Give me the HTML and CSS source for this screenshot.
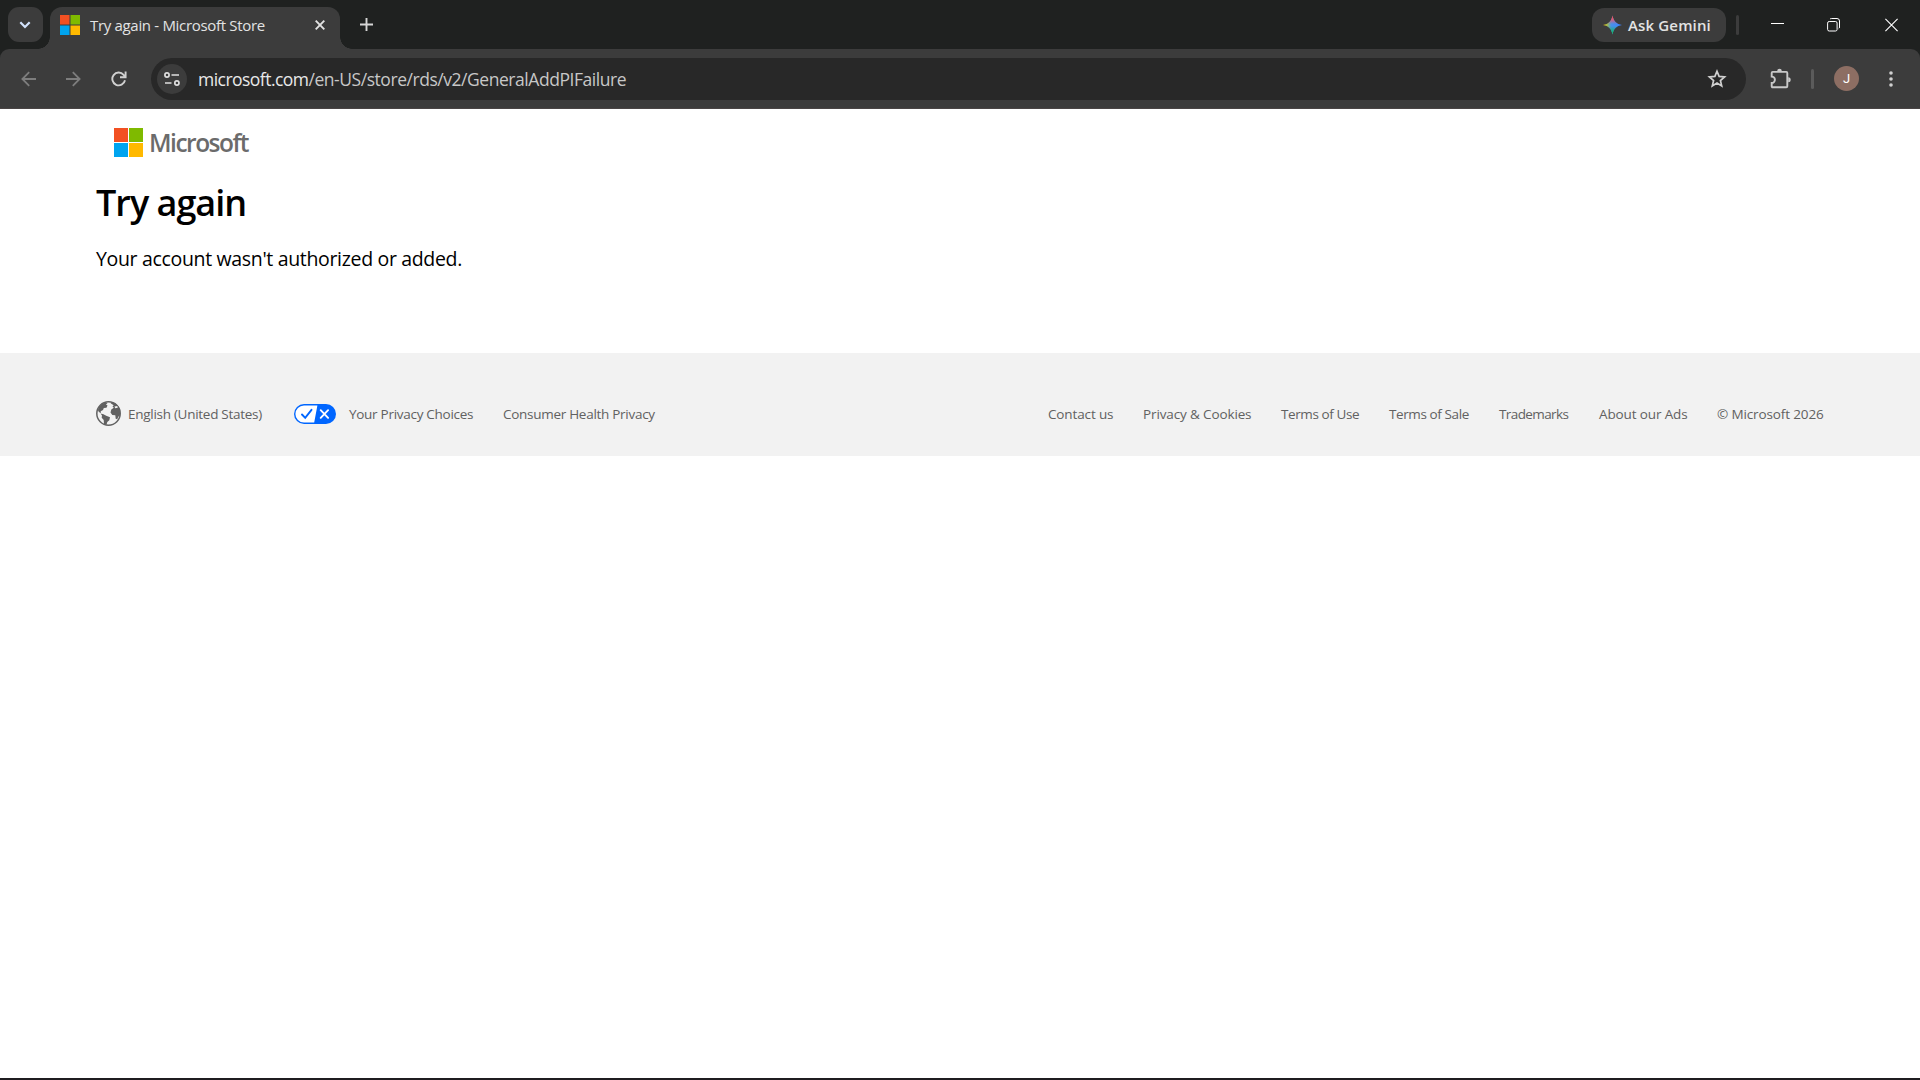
FILE: index.html
```html
<!DOCTYPE html>
<html lang="en">
<head>
    <meta charset="UTF-8">
    <meta name="viewport" content="width=device-width, initial-scale=1.0">
    <title>Try again - Microsoft Store</title>
    <link rel="stylesheet" href="styles.css">
</head>
<body>
    <!-- Browser window -->
    <div class="tab-strip">
        <button class="tab-search">
            <svg width="12" height="8" viewBox="0 0 12 8"><path d="M1.3 1.3 6 6 10.7 1.3" fill="none" stroke="#d3e3fd" stroke-width="2.2"/></svg>
        </button>
        <div class="tab">
            <svg class="favicon" width="20" height="20" viewBox="0 0 20 20">
                <path fill="#f25022" d="M0 0h9.5v9.5H0z"/>
                <path fill="#7fba00" d="M10.5 0H20v9.5h-9.5z"/>
                <path fill="#00a4ef" d="M0 10.5h9.5V20H0z"/>
                <path fill="#ffb900" d="M10.5 10.5H20V20h-9.5z"/>
            </svg>
            <span class="tab-title">Try again - Microsoft Store</span>
            <svg class="tab-close" width="10" height="10" viewBox="0 0 10 10"><path d="M.7.7l8.6 8.6M9.3.7.7 9.3" stroke="#e3e3e3" stroke-width="1.9"/></svg>
        </div>
        <svg class="new-tab" width="13" height="13" viewBox="0 0 13 13"><path d="M6.5 0v13M0 6.5h13" stroke="#d6d6d6" stroke-width="1.9"/></svg>
        <div class="window-area">
            <button class="gemini">
                <svg width="19" height="20" viewBox="0 0 20 20">
                    <defs>
                        <linearGradient id="spark" x1="0" y1="10" x2="20" y2="10" gradientUnits="userSpaceOnUse">
                            <stop offset="0" stop-color="#fbbc04"/>
                            <stop offset=".2" stop-color="#a8bf45"/>
                            <stop offset=".42" stop-color="#4a90e8"/>
                            <stop offset="1" stop-color="#3b82ff"/>
                        </linearGradient>
                        <linearGradient id="spark-top" x1="10" y1="0" x2="10" y2="9" gradientUnits="userSpaceOnUse">
                            <stop offset="0" stop-color="#ff4641"/>
                            <stop offset=".4" stop-color="#e8576a"/>
                            <stop offset="1" stop-color="#e8576a" stop-opacity="0"/>
                        </linearGradient>
                        <linearGradient id="spark-bottom" x1="10" y1="20" x2="10" y2="11" gradientUnits="userSpaceOnUse">
                            <stop offset="0" stop-color="#0ebc5f"/>
                            <stop offset=".4" stop-color="#18b17b"/>
                            <stop offset="1" stop-color="#18b17b" stop-opacity="0"/>
                        </linearGradient>
                    </defs>
                    <path fill="url(#spark)" d="M10 0c1 5.8 4.2 9 10 10-5.8 1-9 4.2-10 10-1-5.8-4.2-9-10-10 5.8-1 9-4.2 10-10z"/>
                    <path fill="url(#spark-top)" d="M10 0c1 5.8 4.2 9 10 10H0c5.8-1 9-4.2 10-10z"/>
                    <path fill="url(#spark-bottom)" d="M0 10h20c-5.8 1-9 4.2-10 10-1-5.8-4.2-9-10-10z"/>
                </svg>
                <span>Ask Gemini</span>
            </button>
            <span class="strip-divider"></span>
            <svg class="minimize" width="13" height="14" viewBox="0 0 13 14"><path d="M0 6.5h13" stroke="#fff"/></svg>
            <svg class="restore" width="13" height="14" viewBox="0 0 13 14" fill="none" stroke="#fff">
                <rect x=".6" y="3.5" width="9.5" height="9.5" rx="1.6"/>
                <path d="M3 1.1Q3.5.5 4.5.5h5.500q2.500 0 2.500 2.500v6q0 1.200-.8 1.600"/>
            </svg>
            <svg class="close" width="13" height="14" viewBox="0 0 13 14"><path d="M.4.9l12.200 12.200M12.600.9.4 13.100" stroke="#fff" stroke-width="1.1"/></svg>
        </div>
    </div>

    <div class="toolbar-frame">
        <div class="toolbar">
            <svg class="back" width="15" height="16" viewBox="0 0 15 16" fill="none" stroke="#7d7d7d" stroke-width="1.8"><path d="M15 8H1.5M8.2 1.200 1.400 8l6.800 6.800"/></svg>
            <svg class="forward" width="15" height="16" viewBox="0 0 15 16" fill="none" stroke="#7d7d7d" stroke-width="1.8"><path d="M0 8h13.500M6.800 1.200 13.600 8l-6.800 6.800"/></svg>
            <svg class="reload" width="16" height="16" viewBox="0 0 16 16" fill="none" stroke="#d0d0d0" stroke-width="1.9"><path d="M14 9.300A6.400 6.400 0 1 1 12.600 3.800L14.400 5.800M14.600.6v5.700H9"/></svg>
            <div class="omnibox">
                <span class="site-info">
                    <svg width="16" height="14" viewBox="0 0 16 14" fill="none" stroke="#dedede" stroke-width="1.7">
                        <circle cx="3" cy="3" r="2.1"/>
                        <path d="M7.500 3H15M1 11h6.500"/>
                        <circle cx="12.9" cy="11" r="2.1"/>
                    </svg>
                </span>
                <span class="url"><span class="host">microsoft.com</span>/en-US/store/rds/v2/GeneralAddPIFailure</span>
                <svg class="star" width="20" height="20" viewBox="0 0 20 20"><path d="M10 2.300l2.100 5.100 5.500.5-4.200 3.600 1.300 5.400-4.700-2.900-4.700 2.900 1.300-5.400-4.200-3.600 5.500-.5z" fill="none" stroke="#d0d0d0" stroke-width="1.7"/></svg>
            </div>
            <svg class="extensions" width="21" height="22" viewBox="0 0 21 22">
                <path d="M2.700 3.900H16.300q1 0 1 1V18.300q0 1-1 1H2.700q-1 0-1-1V15a3 3 0 0 0 0-6.400V4.900q0-1 1-1z" fill="none" stroke="#c9c9c9" stroke-width="1.9"/>
                <path d="M7.200 3.100a2.300 2.300 0 0 1 4.600 0zM18.200 9.300a2.500 2.500 0 0 1 0 5z" fill="#c9c9c9"/>
            </svg>
            <span class="toolbar-divider"></span>
            <span class="avatar">J</span>
            <svg class="menu" width="4" height="16" viewBox="0 0 4 16" fill="#d0d0d0"><circle cx="2" cy="2" r="1.8"/><circle cx="2" cy="8" r="1.8"/><circle cx="2" cy="14" r="1.8"/></svg>
        </div>
    </div>

    <!-- Page -->
    <main class="content">
        <div class="logo">
            <svg width="29" height="29" viewBox="0 0 29 29">
                <path fill="#f25022" d="M0 0h14v14H0z"/>
                <path fill="#7fba00" d="M15 0h14v14H15z"/>
                <path fill="#00a4ef" d="M0 15h14v14H0z"/>
                <path fill="#ffb900" d="M15 15h14v14H15z"/>
            </svg>
            <span>Microsoft</span>
        </div>
        <h1>Try again</h1>
        <p>Your account wasn't authorized or added.</p>
    </main>

    <footer class="footer">
        <div class="footer-left">
            <a class="locale">
                <svg width="25" height="25" viewBox="0 0 25 25">
                    <circle cx="12.5" cy="12.5" r="11.7" fill="none" stroke="#616161" stroke-width="1.5"/>
                    <path fill="#616161" d="M2 8.500C3 5 6 2.200 10 1.200l1.500 1.300-1.700.8 1.700 1.200-1 2.200-2.700.3-.8 2-2.300 1.200.3 1.800-1.800-.7-1-1.200zM4.500 12.500l3 .8 2.700 1.500 3.800 1.500-.7 3-2 1.700-.8 2.800-2.500-.9-.3-3.900-2-2.300.3-2.200zM14.500 2.200l3.200-.7c3.200 1.300 5.600 4 6.500 7.300l-.2 5.700-1.500 1-1.300 2.800-1.500-.5-.4-3.600-3-.3-1.800-2.400.8-3 2.500-1.700-1.300-1.300 1.200-1.300z"/>
                    <path fill="#f2f2f2" d="M18.500 5.500l2.800-.5.500 1.700-2.600.5z"/>
                </svg>
                <span>English (United States)</span>
            </a>
            <a class="choices">
                <svg width="42" height="20" viewBox="0 0 42 20">
                    <rect width="42" height="20" rx="10" fill="#0066ff"/>
                    <path fill="#fff" d="M10 1.400h13.400L20.200 18.600H10a8.600 8.600 0 0 1 0-17.200z"/>
                    <path d="M8 10.500l3.200 3.300 6.300-8" fill="none" stroke="#0066ff" stroke-width="1.9" stroke-linecap="round"/>
                    <path d="M26.700 6.200l7.400 7.600M34.100 6.200l-7.400 7.600" stroke="#fff" stroke-width="1.9" stroke-linecap="round"/>
                </svg>
                <span>Your Privacy Choices</span>
            </a>
            <a>Consumer Health Privacy</a>
        </div>
        <div class="footer-links">
            <a>Contact us</a>
            <a>Privacy &amp; Cookies</a>
            <a class="tight">Terms of Use</a>
            <a class="tight">Terms of Sale</a>
            <a class="tighter">Trademarks</a>
            <a>About our Ads</a>
            <span>© Microsoft 2026</span>
        </div>
    </footer>
    <div class="window-edge"></div>
</body>
</html>
```
FILE: styles.css
```css
* {
    box-sizing: border-box;
}

body {
    margin: 0;
    height: 1080px;
    display: flex;
    flex-direction: column;
    overflow: hidden;
    background-color: #fff;
    color: #000;
    font-family: "Open Sans", "Noto Sans", sans-serif;
}

svg {
    display: block;
    flex: none;
}

button {
    border: none;
    padding: 0;
    font-family: inherit;
}

/* Tab strip */
.tab-strip {
    flex: none;
    height: 49px;
    display: flex;
    align-items: flex-start;
    padding-left: 8px;
    background-color: #1f2120;
}

.tab-search {
    width: 35px;
    height: 35px;
    margin-top: 7px;
    padding-right: 1px;
    display: flex;
    align-items: center;
    justify-content: center;
    border-radius: 11px;
    background-color: #3c3c3c;
}

.tab {
    position: relative;
    width: 290px;
    height: 42px;
    margin: 7px 0 0 7px;
    padding: 0 15px 0 10px;
    display: flex;
    align-items: flex-start;
    border-radius: 12px 12px 0 0;
    background-color: #3c3c3c;
}

/* curved feet of the active tab */
.tab::before,
.tab::after {
    content: "";
    position: absolute;
    bottom: 0;
    width: 12px;
    height: 12px;
}

.tab::before {
    left: -12px;
    background: radial-gradient(circle at 0 0, transparent 11.5px, #3c3c3c 12px);
}

.tab::after {
    right: -12px;
    background: radial-gradient(circle at 100% 0, transparent 11.5px, #3c3c3c 12px);
}

.favicon {
    margin-top: 8px;
}

.tab-title {
    margin: 8px auto 0 10px;
    font-size: 15px;
    line-height: 21px;
    letter-spacing: -0.32px;
    color: #e3e3e3;
}

.tab-close {
    margin-top: 13px;
}

.new-tab {
    margin: 18px 0 0 20px;
}

.window-area {
    margin-left: auto;
    display: flex;
    align-items: flex-start;
}

.gemini {
    width: 134px;
    height: 34px;
    margin-top: 8px;
    padding-left: 11px;
    display: flex;
    align-items: center;
    gap: 6px;
    border-radius: 12px;
    background-color: #3c3c3c;
    color: #e3e3e3;
    font-size: 15px;
    font-weight: 600;
    line-height: 20px;
    letter-spacing: 0.15px;
    white-space: nowrap;
}

.strip-divider {
    width: 3px;
    height: 20px;
    margin: 15px 0 0 10px;
    border-radius: 2px;
    background-color: #3c3c3c;
}

.minimize {
    margin: 17px 0 0 32px;
}

.restore {
    margin: 18px 0 0 43px;
}

.close {
    margin: 18px 22px 0 45px;
}

/* Toolbar */
.toolbar-frame {
    flex: none;
    background-color: #1f2120;
}

.toolbar {
    height: 60px;
    padding: 0 27px 0 21px;
    display: flex;
    align-items: center;
    border-bottom: 1px solid #4a4545;
    border-radius: 9px 9px 0 0;
    background-color: #3c3c3c;
}

.forward {
    margin-left: 30px;
}

.reload {
    margin-left: 30px;
}

.omnibox {
    width: 1595px;
    height: 42px;
    margin-left: 24px;
    padding: 0 19px 0 6px;
    display: flex;
    align-items: center;
    border-radius: 21px;
    background-color: #282828;
}

.site-info {
    width: 30px;
    height: 30px;
    display: flex;
    align-items: center;
    justify-content: center;
    border-radius: 50%;
    background-color: #3c3c3c;
}

.url {
    margin: 0 auto 0 11px;
    font-size: 17.5px;
    line-height: 24px;
    letter-spacing: -0.455px;
    color: #c7c7c7;
}

.host {
    color: #e8e8e8;
    letter-spacing: -0.53px;
}

.extensions {
    margin-left: 24px;
}

.toolbar-divider {
    width: 3px;
    height: 20px;
    margin-left: 20px;
    border-radius: 2px;
    background-color: #5b5b5b;
}

.avatar {
    width: 25px;
    height: 25px;
    margin-left: 20px;
    border-radius: 50%;
    background-color: #8d6e63;
    color: #fff;
    font-family: Roboto, sans-serif;
    font-size: 13px;
    line-height: 26px;
    text-align: center;
}

.menu {
    margin-left: auto;
}

/* Page content */
.content {
    flex: none;
    height: 244px;
    padding: 19px 96px 0;
}

.logo {
    height: 29px;
    margin-left: 18px;
    display: flex;
    align-items: center;
    gap: 6px;
    color: #6b6b6b;
    font-size: 24.5px;
    font-weight: 600;
    line-height: 29px;
    letter-spacing: -1.5px;
}

h1 {
    margin: 21px 0 0;
    font-size: 36px;
    font-weight: 600;
    line-height: 50px;
    letter-spacing: -1px;
}

p {
    margin: 17px 0 0;
    font-size: 19.5px;
    line-height: 28px;
    letter-spacing: -0.33px;
}

/* Footer */
.footer {
    flex: none;
    height: 103px;
    padding: 18px 96px 0;
    display: flex;
    align-items: center;
    justify-content: space-between;
    background-color: #f2f2f2;
    color: #616161;
    font-size: 13.5px;
    line-height: 20px;
    letter-spacing: -0.28px;
    white-space: nowrap;
}

.footer-left {
    display: grid;
    grid-template-columns: 168px 179px 152px;
    align-items: center;
    gap: 30px;
}

.locale {
    display: flex;
    align-items: center;
    gap: 7px;
}

.choices {
    display: flex;
    align-items: center;
    gap: 13px;
}

.footer-links {
    display: grid;
    grid-template-columns: 65px 108px 78px 80px 70px 88px 107px;
    gap: 30px;
    letter-spacing: -0.13px;
}

.tight {
    letter-spacing: -0.4px;
}

.tighter {
    letter-spacing: -0.6px;
}

.window-edge {
    height: 2px;
    margin-top: auto;
    background-color: #1f1d20;
}
```
